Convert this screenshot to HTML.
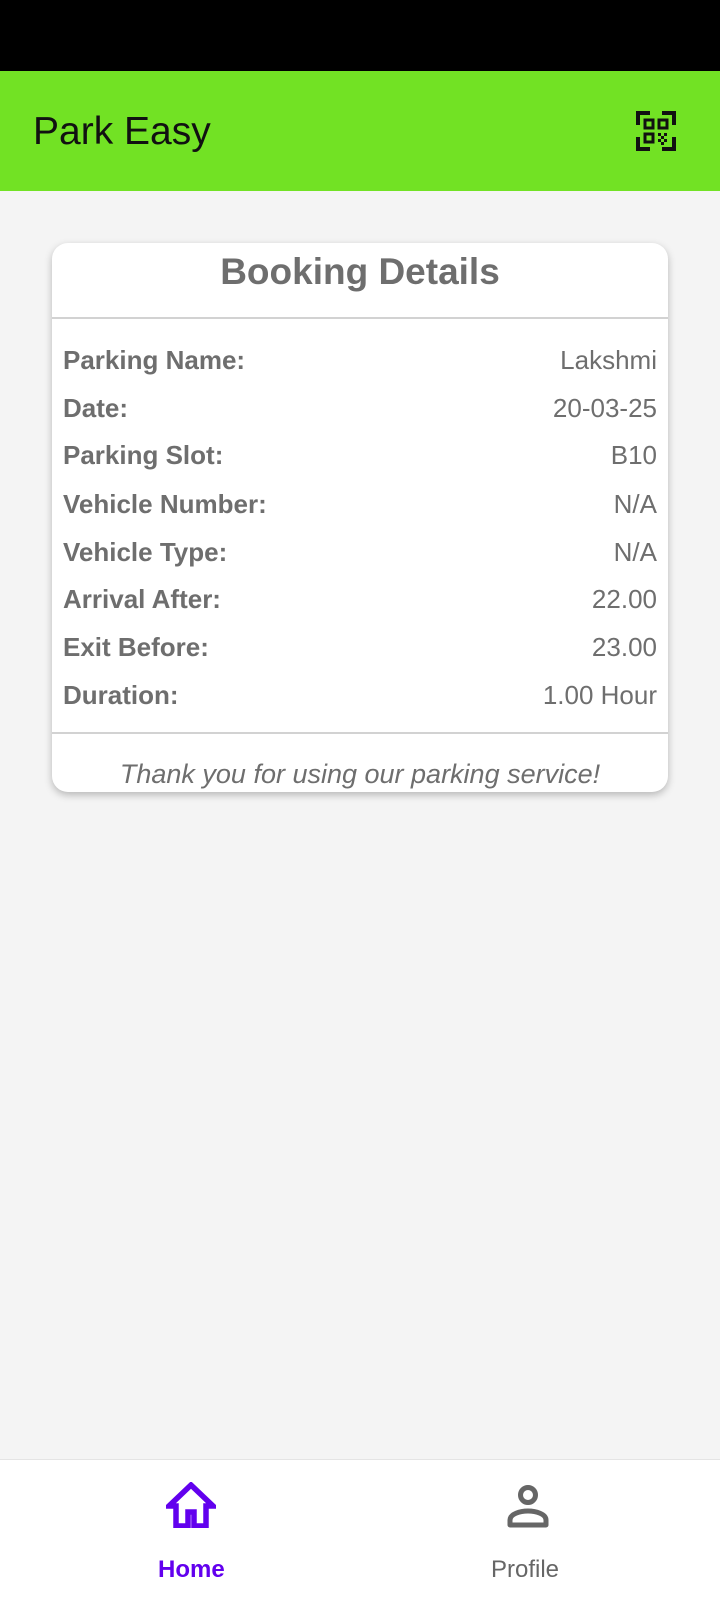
<!DOCTYPE html>
<html><head><meta charset="utf-8"><style>
*{margin:0;padding:0;box-sizing:border-box}
body{width:720px;height:1600px;background:#f4f4f4;font-family:"Liberation Sans",Roboto,sans-serif;position:relative;overflow:hidden}
.status{position:absolute;top:0;left:0;width:720px;height:71px;background:#000}
.hdr{position:absolute;top:71px;left:0;width:720px;height:120px;background:#72e224}
.hdr h1{position:absolute;left:33px;top:39px;font-size:39px;font-weight:normal;color:#111}
.card{position:absolute;left:52px;top:243px;width:616px;height:549px;background:#fff;border-radius:16px;box-shadow:0 3px 8px rgba(0,0,0,.25)}
.title{position:absolute;top:8px;width:100%;text-align:center;font-size:37px;font-weight:bold;color:#6e6e6e}
.hr{position:absolute;left:0;width:100%;height:2px;background:#d2d2d2}
.row{position:absolute;left:11px;right:11px;font-size:26px;color:#6e6e6e;display:flex;justify-content:space-between}
.row b{font-weight:bold}
.thanks{position:absolute;top:516px;width:100%;text-align:center;font-style:italic;font-size:27px;color:#6e6e6e}
.nav{position:absolute;top:1459px;left:0;width:720px;height:141px;background:#fff;border-top:1px solid #e4e4e4}
.lbl{position:absolute;top:1556px;font-size:24px}
</style></head><body>
<div class="status"></div>
<div class="hdr"><h1>Park Easy</h1>
<svg style="position:absolute;left:636px;top:40px" width="40" height="40" viewBox="0 0 40 40" fill="none" stroke="#111" stroke-width="4">
<path d="M2 12V2h10M28 2h10v10M38 28v10H28M12 38H2V28" stroke-linecap="square"/>
<rect x="9" y="9" width="8" height="8" stroke-width="3"/><rect x="23" y="9" width="8" height="8" stroke-width="3"/><rect x="9" y="23" width="8" height="8" stroke-width="3"/>
<g fill="#111" stroke="none"><rect x="22" y="22" width="3" height="3"/><rect x="28" y="22" width="3" height="3"/><rect x="25" y="25" width="3" height="3"/><rect x="22" y="28" width="3" height="3"/><rect x="28" y="28" width="3" height="3"/><rect x="25" y="31" width="3" height="3"/></g>
</svg></div>
<div class="card">
<div class="title">Booking Details</div>
<div class="hr" style="top:74px"></div>
<div class="row" style="top:102px"><b>Parking Name:</b><span>Lakshmi</span></div>
<div class="row" style="top:150px"><b>Date:</b><span>20-03-25</span></div>
<div class="row" style="top:197px"><b>Parking Slot:</b><span>B10</span></div>
<div class="row" style="top:246px"><b>Vehicle Number:</b><span>N/A</span></div>
<div class="row" style="top:294px"><b>Vehicle Type:</b><span>N/A</span></div>
<div class="row" style="top:341px"><b>Arrival After:</b><span>22.00</span></div>
<div class="row" style="top:389px"><b>Exit Before:</b><span>23.00</span></div>
<div class="row" style="top:437px"><b>Duration:</b><span>1.00 Hour</span></div>
<div class="hr" style="top:489px"></div>
<div class="thanks">Thank you for using our parking service!</div>
</div>
<div class="nav"></div>
<svg style="position:absolute;left:166px;top:1482px" width="50" height="46" viewBox="0 0 50 46"><path d="M25 3L3 24h7v20h12V30h6v14h12V24h7z" fill="none" stroke="#6200ee" stroke-width="5.5" stroke-linejoin="miter"/></svg>
<svg style="position:absolute;left:507px;top:1484px" width="42" height="44" viewBox="0 0 42 44"><circle cx="21" cy="11" r="7.5" fill="none" stroke="#666" stroke-width="5"/><path d="M3 41v-5c0-6 10-9 18-9s18 3 18 9v5z" fill="none" stroke="#666" stroke-width="5" stroke-linejoin="round"/></svg>
<div class="lbl" style="left:158px;color:#6200ee;font-weight:bold">Home</div>
<div class="lbl" style="left:491px;color:#666">Profile</div>
</body></html>
